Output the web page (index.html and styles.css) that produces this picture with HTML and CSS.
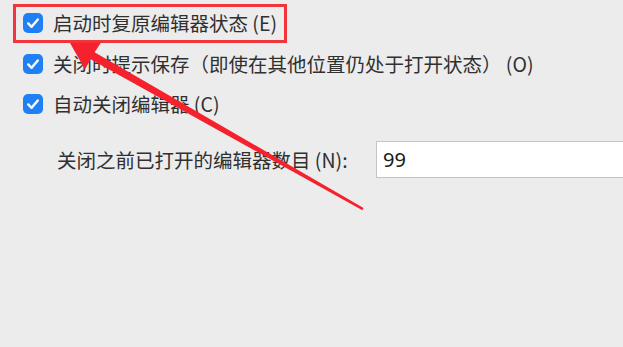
FILE: index.html
```html
<!DOCTYPE html>
<html lang="zh-CN">
<head>
<meta charset="utf-8">
<link rel="stylesheet" href="styles.css">
</head>
<body>
<div class="panel">
  <label class="row">
    <span class="check"><svg viewBox="0 0 20 20" width="20" height="20"><path d="M5.2 10.4 L8.6 13.8 L14.8 6.4" fill="none" stroke="#fff" stroke-width="2.4" stroke-linecap="round" stroke-linejoin="round"/></svg></span>
    <span class="text">启动时复原编辑器状态 (E)</span>
  </label>
  <label class="row">
    <span class="check"><svg viewBox="0 0 20 20" width="20" height="20"><path d="M5.2 10.4 L8.6 13.8 L14.8 6.4" fill="none" stroke="#fff" stroke-width="2.4" stroke-linecap="round" stroke-linejoin="round"/></svg></span>
    <span class="text">关闭时提示保存（即使在其他位置仍处于打开状态） (O)</span>
  </label>
  <label class="row">
    <span class="check"><svg viewBox="0 0 20 20" width="20" height="20"><path d="M5.2 10.4 L8.6 13.8 L14.8 6.4" fill="none" stroke="#fff" stroke-width="2.4" stroke-linecap="round" stroke-linejoin="round"/></svg></span>
    <span class="text">自动关闭编辑器 (C)</span>
  </label>
  <div class="field">
    <span class="text field-label">关闭之前已打开的编辑器数目 (N):</span>
    <div class="input">99</div>
  </div>
</div>
<div class="highlight"></div>
<svg class="arrow" width="623" height="347" viewBox="0 0 623 347">
  <polygon fill="#f5222d" points="70,43 101,42.5 94.6,52.3 363.6,208 362.4,210.2 90.6,59.3 85,69.5"/>
</svg>
</body>
</html>
```
FILE: styles.css
```css
html, body {
  margin: 0;
  padding: 0;
}
body {
  width: 623px;
  height: 347px;
  background: #ececec;
  overflow: hidden;
  position: relative;
  font-family: "Noto Sans CJK SC", "Noto Sans", sans-serif;
  color: #303030;
}
.panel {
  display: flex;
  flex-direction: column;
  padding: 13px 0 0 23px;
}
.row {
  display: flex;
  align-items: center;
  height: 20px;
  gap: 10px;
  margin-bottom: 21px;
}
.row:nth-child(2) {
  margin-bottom: 20px;
}
.check {
  width: 20px;
  height: 20px;
  border-radius: 5px;
  background: #1f7ff5;
  display: flex;
  flex: none;
}
.text {
  font-size: 19.5px;
  line-height: 20px;
  white-space: nowrap;
}
.field {
  display: flex;
  align-items: center;
  margin-top: 6px;
  padding-left: 34px;
}
.field-label {
  width: 319px;
  flex: none;
}
.input {
  flex: 1;
  height: 35px;
  margin-right: -10px;
  background: #fff;
  border: 1px solid #c4c4c4;
  font-size: 20px;
  line-height: 35px;
  padding-left: 6px;
  color: #1a1a1a;
  font-family: "Noto Sans", sans-serif;
}
.highlight {
  position: absolute;
  left: 13px;
  top: 4px;
  width: 268px;
  height: 33px;
  border: 3px solid #f2343b;
}
.arrow {
  position: absolute;
  left: 0;
  top: 0;
}
```
